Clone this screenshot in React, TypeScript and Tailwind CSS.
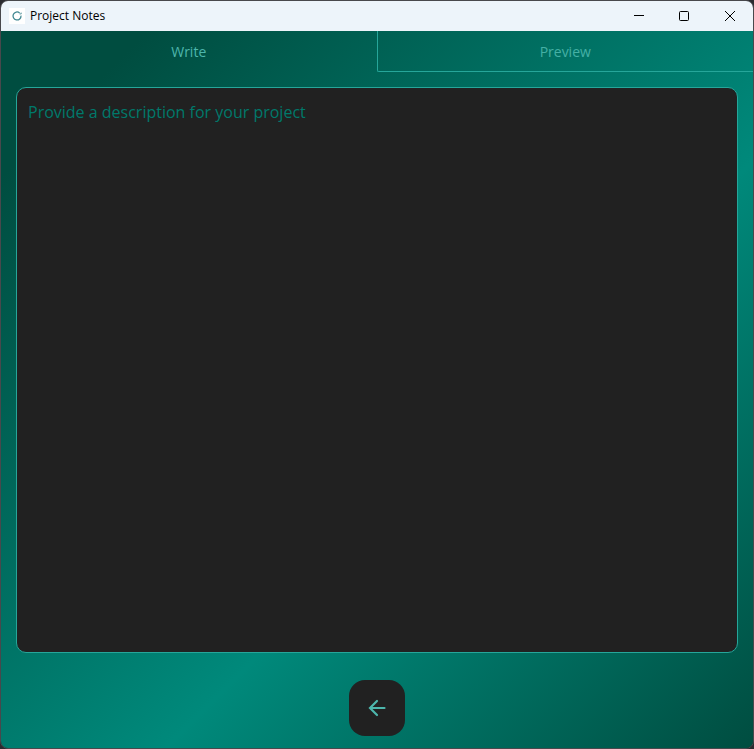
import { useState } from "react";

function AppIcon() {
  return (
    <span className="flex size-4 items-center justify-center bg-white">
      <svg viewBox="0 0 16 16" className="size-4" fill="none" stroke="#3f8791" strokeWidth="1.3" aria-hidden="true">
        <path d="M10.6 4.9A4 4 0 1 0 12 7.6" />
        <path d="M10.4 5.9l1.8.1V4.6" strokeWidth="0.8" />
      </svg>
    </span>
  );
}

function TitleBar() {
  return (
    <header className="flex h-[30px] items-center bg-[#edf4fa] pl-2">
      <AppIcon />
      <h1 className="ml-[5px] flex-1 text-[12px] leading-4 text-black">Project Notes</h1>
      <div className="flex h-full">
        <button type="button" aria-label="Minimize" className="flex w-[45px] items-center justify-center">
          <svg viewBox="0 0 10 10" className="size-[10px]" stroke="#000" shapeRendering="crispEdges" aria-hidden="true">
            <path d="M0 4.5h10" />
          </svg>
        </button>
        <button type="button" aria-label="Maximize" className="flex w-[46px] items-center justify-center">
          <svg viewBox="0 0 10 10" className="size-[10px]" fill="none" stroke="#000" aria-hidden="true">
            <rect x=".5" y=".5" width="9" height="9" rx="1" />
          </svg>
        </button>
        <button type="button" aria-label="Close" className="flex w-[46px] items-center justify-center">
          <svg viewBox="0 0 10 10" className="size-[10px]" stroke="#000" aria-hidden="true">
            <path d="M0 0l10 10M10 0L0 10" />
          </svg>
        </button>
      </div>
    </header>
  );
}

const TABS = ["Write", "Preview"] as const;

export default function App() {
  const [active, setActive] = useState<(typeof TABS)[number]>("Write");
  const [notes, setNotes] = useState("");

  return (
    <div className="flex min-h-screen flex-col bg-[#2b2b30] font-['Open_Sans','Noto_Sans',sans-serif]">
      <div className="flex flex-1 flex-col overflow-hidden rounded-lg border border-[#48484c]">
        <TitleBar />
        <main className="flex flex-1 flex-col bg-[linear-gradient(135deg,#004d40_10%,#00897b_60%,#004d40_100%)]">
          <div role="tablist" className="flex h-[41px]">
            {TABS.map((tab) => (
              <button
                key={tab}
                type="button"
                role="tab"
                aria-selected={active === tab}
                onClick={() => setActive(tab)}
                className={
                  active === tab
                    ? "flex-1 pt-px text-[14px] leading-5 text-[#4db6ac]"
                    : "flex-1 rounded-bl-xs border-b border-l border-[#26a69a] pt-0.5 text-[14px] leading-5 text-[#45b0a5]"
                }
              >
                {tab}
              </button>
            ))}
          </div>
          <div className="flex flex-1 flex-col px-[15px] pt-[15px] pb-[27px]">
            {active === "Write" ? (
              <textarea
                aria-label="Project description"
                placeholder="Provide a description for your project"
                value={notes}
                onChange={(event) => setNotes(event.target.value)}
                className="w-full flex-1 resize-none rounded-[10px] border border-[#26a69a] bg-[#212121] px-[11px] py-3 text-[16px] leading-6 text-[#4db6ac] outline-none placeholder:text-[#00796b]"
              />
            ) : (
              <div className="flex-1 rounded-[10px] border border-[#26a69a] bg-[#212121] px-[11px] py-3 text-[16px] leading-6 whitespace-pre-wrap text-[#4db6ac]">
                {notes}
              </div>
            )}
          </div>
          <footer className="flex justify-center pb-3">
            <button type="button" aria-label="Back" className="flex size-14 items-center justify-center rounded-2xl bg-[#212121]">
              <svg
                viewBox="0 0 24 24"
                className="size-6"
                fill="none"
                stroke="#4db6ac"
                strokeWidth="2.2"
                strokeLinecap="round"
                aria-hidden="true"
              >
                <path d="M19.5 12H5.5M12 5L5 12l7 7" />
              </svg>
            </button>
          </footer>
        </main>
      </div>
    </div>
  );
}
